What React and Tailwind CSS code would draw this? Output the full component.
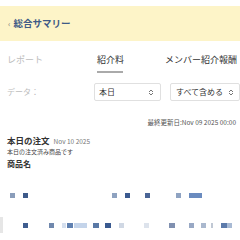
import React from 'react';

const font = { fontFamily: '"Noto Sans CJK JP", "Noto Sans", sans-serif' };

// blurred product rows (pixel blocks)
const rowOne = [
    'ml-[10px] w-[5px] bg-[#8a9dba]',
    'ml-[8px] w-[5px] bg-[#3d5a8a]',
    'ml-[84px] w-[5px] bg-[#8ea2c0]',
    'ml-[8px] w-[5px] bg-[#3b5a90]',
    'ml-[15px] w-[5px] bg-[#4a6596]',
    'ml-[26px] w-[5px] bg-[#8fa3c2]',
    'ml-[8px] w-[13px] bg-[#6a8bbf]',
];

const rowTwo = [
    'ml-[20px] w-[5px] bg-[#3f5d8f]',
    'ml-[21px] w-[5px] bg-[#7088ad]',
    'ml-[8px] w-[4px] bg-[#d5dfee]',
    'ml-[1px] w-[6px] bg-[#5f80b0]',
    'ml-[1px] w-[13px] bg-[#c4d4ea]',
    'ml-[6px] w-[6px] bg-[#5a79a6]',
    'ml-[6px] w-[6px] bg-[#3a5a90]',
    'ml-[8px] w-[5px] bg-[#d0d8e4]',
    'ml-[20px] w-[5px] bg-[#dde3ec]',
    'ml-[20px] w-[6px] bg-[#8090b0]',
    'ml-[14px] w-[5px] bg-[#98a8c4]',
    'ml-[7px] w-[5px] bg-[#aab8ce]',
    'ml-[5px] w-[2px] bg-[#c0c8d4]',
    'ml-[8px] w-[6px] bg-[#5c7bab]',
    'ml-[0px] w-[5px] bg-[#a8bad4]',
];

function UpDown() {
    return (
        <svg width="6" height="7" viewBox="0 0 6 7" fill="none" stroke="#666" strokeWidth="0.9">
            <path d="M1 3 L3 1 L5 3" />
            <path d="M1 4 L3 6 L5 4" />
        </svg>
    );
}

export default function App() {
    return (
        <div className="w-[240px] h-[240px] bg-white overflow-hidden" style={font}>
            <div className="h-[6px]" />

            {/* Header */}
            <div className="h-[35px] bg-[#fdf4c8] flex items-center pl-[8px] gap-[3px]">
                <span className="text-[8px] text-[#777] leading-none">‹</span>
                <span className="text-[9.5px] font-bold text-[#3f5a86] leading-none">総合サマリー</span>
            </div>

            {/* Tabs */}
            <div className="h-[37px] flex items-center text-[9px] leading-none">
                <div className="w-[97px] pl-[7px] text-[#bdbdbd]">レポート</div>
                <div className="relative w-[68px] text-[#333]">
                    紹介料
                    <div className="absolute left-0 top-[16px] w-[26px] h-[1.5px] bg-[#aaa]" />
                </div>
                <div className="text-[#333] whitespace-nowrap">メンバー紹介報酬</div>
            </div>

            {/* Filters */}
            <div className="h-[28px] flex items-center text-[8px] leading-none">
                <div className="w-[94px] pl-[7px] text-[#bdbdbd]">データ：</div>
                <div className="w-[67px] h-[18px] border border-[#e0e0e0] rounded-[2px] flex items-center justify-between pl-[4px] pr-[6px] text-[#333]">
                    <span>本日</span>
                    <UpDown />
                </div>
                <div className="ml-[9px] w-[70px] h-[18px] border border-[#e0e0e0] rounded-[2px] flex items-center justify-between pl-[5px] pr-[5px] text-[#333]">
                    <span>すべて含める</span>
                    <UpDown />
                </div>
            </div>

            <div className="flex justify-end pr-[4px] mt-[13px] text-[6.5px] text-[#555] leading-none">
                最終更新日:Nov 09 2025 00:00
            </div>

            {/* Today orders */}
            <div className="pl-[7px] mt-[10px] flex items-baseline gap-[4px] leading-none">
                <span className="text-[8.5px] font-bold text-[#333]">本日の注文</span>
                <span className="text-[6.5px] text-[#777]">Nov 10 2025</span>
            </div>
            <div className="pl-[7px] mt-[5px] text-[6px] text-[#444] leading-none">本日の注文済み商品です</div>
            <div className="pl-[7px] mt-[5px] text-[8px] font-bold text-[#333] leading-none">商品名</div>

            <div className="mt-[25px] flex h-[5px]">
                {rowOne.map((c, i) => (
                    <span key={i} className={`h-[5px] shrink-0 ${c}`} />
                ))}
            </div>

            <div className="mt-[19px] flex items-center h-[16px]">
                <span className="w-[3px] h-[16px] bg-[#e6e6e6] shrink-0" />
                {rowTwo.map((c, i) => (
                    <span key={i} className={`h-[5px] shrink-0 ${c}`} />
                ))}
            </div>
        </div>
    );
}
